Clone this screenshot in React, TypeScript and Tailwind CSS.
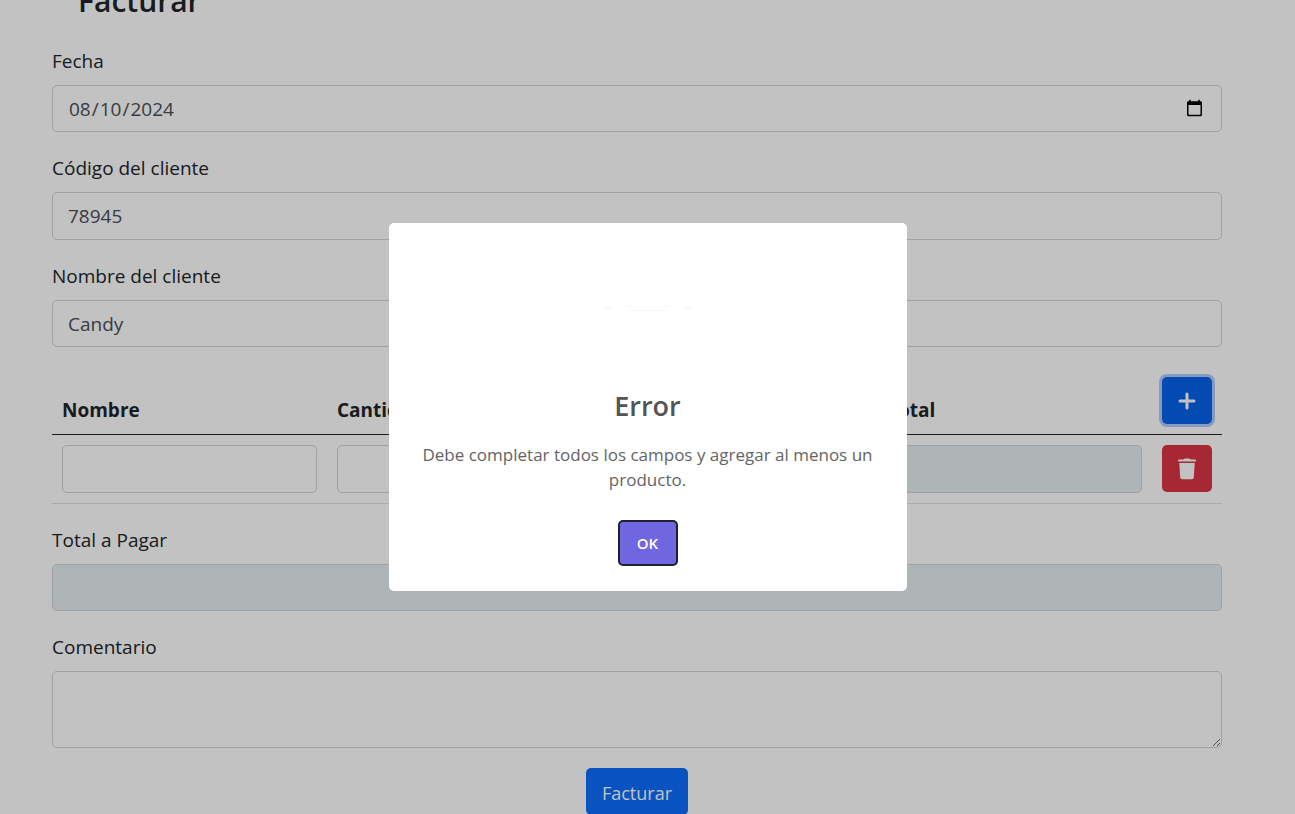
import { Plus } from "lucide-react";
import type { ReactNode } from "react";

const controlClass =
  "block w-full rounded-[5px] border border-[#ced4da] bg-white px-[15px] text-[19px] leading-7 text-[#495057]";

function Field({ id, label, children }: { id: string; label: string; children: ReactNode }) {
  return (
    <div className="mb-5">
      <label htmlFor={id} className="mb-2 block text-[19px] leading-8">
        {label}
      </label>
      {children}
    </div>
  );
}

function TrashIcon() {
  return (
    <svg viewBox="0 0 18 22" className="h-[22px] w-[18px]" fill="currentColor" aria-hidden="true">
      <path d="M0 3.6V2.6a1 1 0 0 1 1-1h4.200L6 .9A1.300 1.300 0 0 1 6.900.5h4.200a1.300 1.300 0 0 1 .9.4l.8.7H17a1 1 0 0 1 1 1v1z" />
      <path d="M1.300 4.900h15.400l-.9 14.700a1.800 1.800 0 0 1-1.800 1.600H4a1.800 1.800 0 0 1-1.800-1.600z" />
    </svg>
  );
}

function ErrorDialog() {
  return (
    <div className="fixed inset-0 flex items-center justify-center bg-black/24">
      <div
        role="alertdialog"
        aria-modal="true"
        aria-labelledby="dialog-title"
        aria-describedby="dialog-text"
        className="flex w-[518px] max-w-full flex-col items-center rounded-[5px] bg-white px-6 pb-[25px] text-center"
      >
        <svg viewBox="0 0 100 86" className="mt-[41px] h-[86px] w-[100px]" fill="none" stroke="#fef4f4" aria-hidden="true">
          <path d="M6 44.500h4M9 43.500h5M11 45.500h5M84 45.500h5M86 43.500h5M90 44.500h4M27 42.500h9M64 42.500h9M32 46.500h38" />
        </svg>
        <h2 id="dialog-title" className="mt-[35px] text-[27px] font-semibold leading-[42px] text-[#545454]">
          Error
        </h2>
        <p id="dialog-text" className="mt-[15px] text-[17px] leading-[25px] text-[#646464]">
          Debe completar todos los campos y agregar al menos un producto.
        </p>
        <button
          type="button"
          className="mt-7 h-[46px] w-[60px] rounded-[5px] border-2 border-[#202030] bg-[#7066e0] text-[15px] font-semibold text-white"
        >
          OK
        </button>
      </div>
    </div>
  );
}

export default function App() {
  return (
    <div className="h-screen overflow-hidden bg-white font-['Open_Sans','Noto_Sans',sans-serif] text-[#212529]">
      <main className="-mt-5 pl-[52px] pr-[73px]">
        <h1 className="mb-[23px] pl-[26px] text-[30px] font-semibold leading-[42px]">Facturar</h1>
        <form>
          <Field id="fecha" label="Fecha">
            <input id="fecha" type="date" defaultValue="2024-08-10" className={`${controlClass} h-[47px]`} />
          </Field>
          <Field id="codigo" label="Código del cliente">
            <input id="codigo" type="text" defaultValue="78945" className={`${controlClass} h-[48px]`} />
          </Field>
          <Field id="nombre" label="Nombre del cliente">
            <input id="nombre" type="text" defaultValue="Candy" className={`${controlClass} h-[47px]`} />
          </Field>

          <table className="mb-5 w-full table-fixed border-collapse text-left text-[19px]">
            <thead>
              <tr className="border-b border-[#212529]">
                <th className="px-[10px] pb-[9px] align-bottom font-bold leading-[30px]">Nombre</th>
                <th className="px-[10px] pb-[9px] align-bottom font-bold leading-[30px]">Cantidad</th>
                <th aria-label="Precio" />
                <th className="px-[10px] pb-[9px] align-bottom font-bold leading-[30px]">Total</th>
                <th className="w-[70px] p-[10px]">
                  <button
                    type="button"
                    aria-label="Agregar producto"
                    className="flex h-[47px] w-[50px] items-center justify-center rounded-[5px] bg-[#0563ec] text-white ring-3 ring-[#b0ccfb]"
                  >
                    <Plus size={24} strokeWidth={3} />
                  </button>
                </th>
              </tr>
            </thead>
            <tbody>
              <tr className="border-b border-[#dee2e6]">
                <td className="p-[10px]">
                  <input type="text" aria-label="Nombre" className={`${controlClass} h-[48px]`} />
                </td>
                <td className="p-[10px]">
                  <input type="text" aria-label="Cantidad" className={`${controlClass} h-[48px]`} />
                </td>
                <td className="p-[10px]">
                  <input type="text" aria-label="Precio" className={`${controlClass} h-[48px]`} />
                </td>
                <td className="p-[10px]">
                  <input
                    type="text"
                    aria-label="Total"
                    disabled
                    className="block h-[48px] w-full rounded-[5px] border border-[#ced4da] bg-[#e7edf0] px-[15px]"
                  />
                </td>
                <td className="p-[10px] align-top">
                  <button
                    type="button"
                    aria-label="Eliminar producto"
                    className="flex h-[47px] w-[50px] items-center justify-center rounded-[5px] bg-[#dc3545] text-white"
                  >
                    <TrashIcon />
                  </button>
                </td>
              </tr>
            </tbody>
          </table>

          <Field id="total" label="Total a Pagar">
            <input
              id="total"
              type="text"
              disabled
              className="block h-[47px] w-full rounded-[5px] border border-[#ced4da] bg-[#e7edf0] px-[15px]"
            />
          </Field>
          <Field id="comentario" label="Comentario">
            <textarea id="comentario" className={`${controlClass} h-[77px] resize-y py-2`} />
          </Field>
          <div className="flex justify-center">
            <button type="button" className="h-[47px] rounded-[5px] bg-[#0d6efd] px-4 pt-1 text-[18px] text-white">
              Facturar
            </button>
          </div>
        </form>
      </main>
      <ErrorDialog />
    </div>
  );
}
